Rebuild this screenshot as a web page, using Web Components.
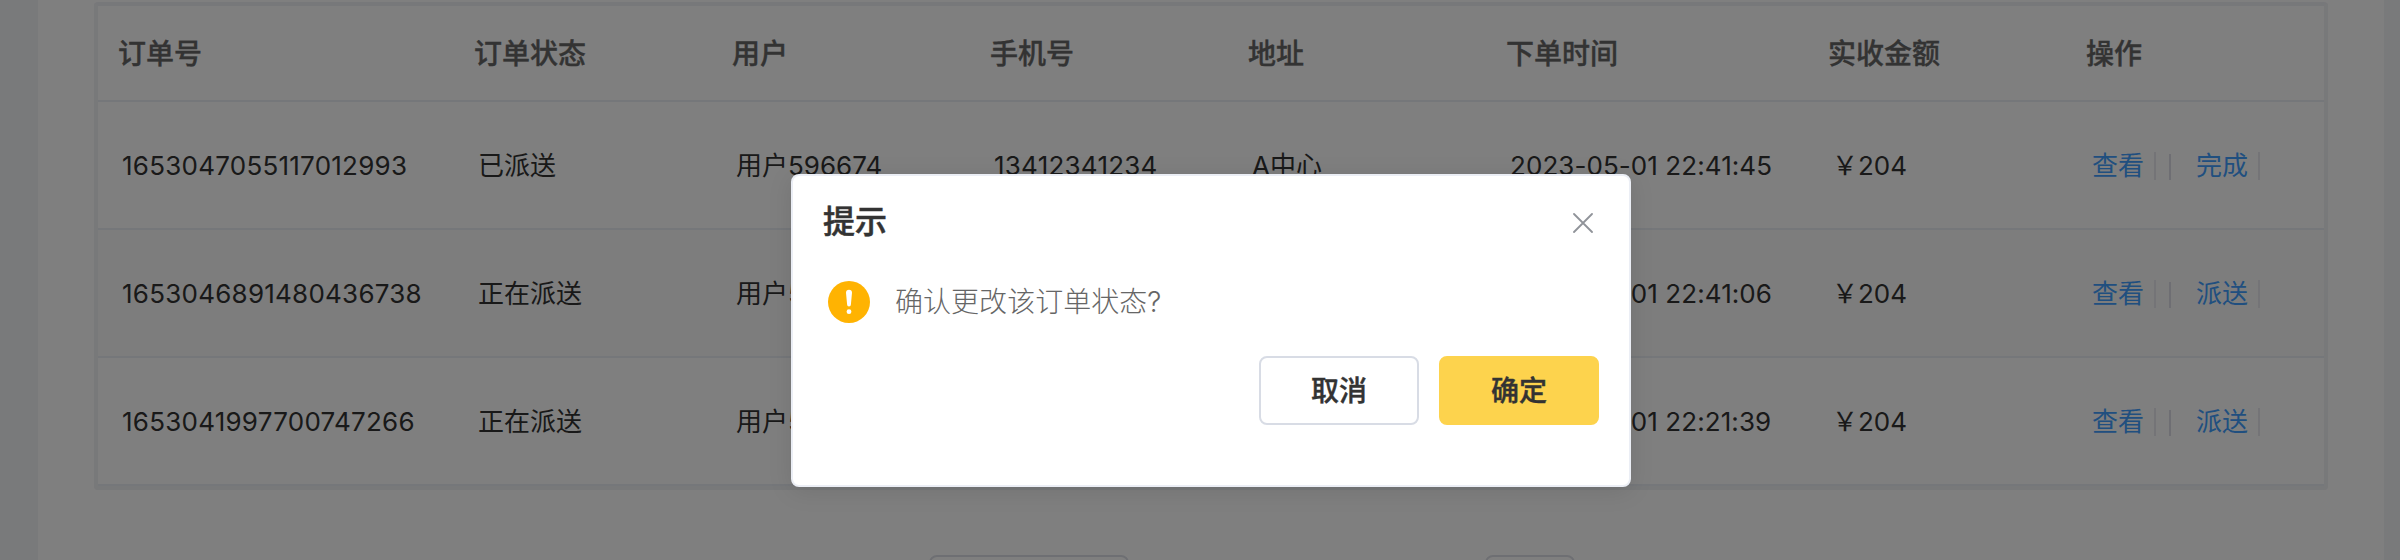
<!DOCTYPE html>
<html lang="zh-CN">
<head>
<meta charset="utf-8">
<title>订单管理</title>
<style>
html,body{margin:0;height:560px;overflow:hidden}
body{font-family:Inter,"Noto Sans CJK SC",sans-serif;color:#333;background:#f3f4f7}
</style>
</head>
<body>
<order-page></order-page>
<script>
const define = (name, html, setup) => customElements.define(name, class extends HTMLElement {
  constructor() {
    super();
    const t = document.createElement('template');
    t.innerHTML = html;
    this.attachShadow({mode: 'open'}).append(t.content.cloneNode(true));
  }
  connectedCallback() { if (setup) setup(this, this.shadowRoot); }
});

const COLS = '356px 258px 258px 258px 258px 322px 258px 258px';

define('order-head', `<style>
:host{display:grid;grid-template-columns:${COLS};height:94px;align-items:center;border-bottom:2px solid #ebeef5;font-size:28px;font-weight:500;-webkit-text-stroke:.35px;line-height:40px;color:#666}
span{padding:1px 0 0 20px}
</style>
<span>订单号</span><span>订单状态</span><span>用户</span><span>手机号</span><span>地址</span><span>下单时间</span><span>实收金额</span><span>操作</span>`);

define('order-actions', `<style>
:host{display:flex;align-items:flex-end;height:28px;font-size:26px;line-height:28px;color:#419eff}
.a{box-sizing:border-box;width:64px;height:28px;border-right:2px solid #e9e9ee}
i{width:2px;height:26px;background:#dcdde6;margin:0 25px 0 13px}
</style>
<span class="a">查看</span><i></i><span class="a"><slot></slot></span>`);

define('order-row', `<style>
:host{display:grid;grid-template-columns:${COLS};height:126px;align-items:center;border-bottom:2px solid #ebeef5;font-size:26px;line-height:36px;color:#333;white-space:nowrap}
:host([striped]){background:#fafafa}
span{padding:2px 0 0 24px}
[data-f=no],[data-f=phone]{letter-spacing:.24px}
[data-f=time]{letter-spacing:.07px}
order-actions{margin:2px 0 0 26px}
</style>
<span data-f="no"></span><span data-f="state"></span><span data-f="user"></span><span data-f="phone"></span><span data-f="address"></span><span data-f="time"></span><span data-f="amount"></span><order-actions></order-actions>`,
(el, root) => {
  for (const s of root.querySelectorAll('[data-f]')) s.textContent = el.getAttribute(s.dataset.f);
  root.querySelector('order-actions').textContent = el.getAttribute('action');
});

define('order-table', `<style>
:host{display:block;box-sizing:border-box;width:2234px;height:488px;border:4px solid #f1f2f5;border-top-color:#eff0f4;border-radius:4px}
</style><slot></slot>`);

define('page-control', `<style>
:host{display:block;box-sizing:border-box;height:60px;border:2px solid #dddfe6;border-radius:8px}
</style>`);

define('icon-close', `<style>:host{display:block;width:20px;height:20px}svg{display:block}</style>
<svg width="20" height="20" viewBox="0 0 20 20" fill="none" stroke="#909399" stroke-width="1.8" stroke-linecap="round"><path d="M1 1l18 18M19 1L1 19"/></svg>`);

define('icon-warning', `<style>:host{display:block;width:42px;height:42px}svg{display:block}</style>
<svg width="42" height="42" viewBox="0 0 42 42"><circle cx="21" cy="21" r="21" fill="#ffb302"/><path d="M18 11.8a3 3 0 0 1 6 0L22.9 23.5a1.9 1.9 0 0 1-3.8 0Z" fill="#fff"/><circle cx="21" cy="30.7" r="2.4" fill="#fff"/></svg>`);

define('app-button', `<style>
:host{display:flex;box-sizing:border-box;width:160px;height:69px;align-items:center;justify-content:center;border:2px solid #d8dce5;border-radius:8px;background:#fff;font-size:28px;font-weight:500;-webkit-text-stroke:.4px;line-height:40px;color:#333}
:host([primary]){background:#fdd34d;border-color:#fdd34d}
</style><slot></slot>`);

define('confirm-dialog', `<style>
:host{display:flex;flex-direction:column;box-sizing:border-box;width:840px;height:313px;padding:26px 30px 0;border:2px solid #ebeef5;border-radius:8px;background:#fff;box-shadow:0 4px 24px rgba(0,0,0,.1)}
header{display:flex;justify-content:space-between;align-items:center;height:40px;font-size:32px;line-height:40px;font-weight:500;color:#333}
header span{-webkit-text-stroke:.5px}
icon-close{margin:1px 6px 0 0}
.msg{display:flex;align-items:center;gap:25px;height:42px;margin-top:39px;padding-left:5px;font-size:28px;line-height:40px;font-weight:300;color:#666}
.msg span{letter-spacing:.04px}
footer{display:flex;justify-content:flex-end;gap:20px;margin-top:33px}
</style>
<header><span>提示</span><icon-close></icon-close></header>
<div class="msg"><icon-warning></icon-warning><span>确认更改该订单状态?</span></div>
<footer><app-button>取消</app-button><app-button primary>确定</app-button></footer>`);

define('order-page', `<style>
:host{display:block;position:relative;width:2400px;height:560px;overflow:hidden;background:#f3f4f7}
main{box-sizing:border-box;width:2346px;height:560px;margin-left:38px;padding:2px 0 0 56px;background:#fff;overflow:hidden}
.pager{display:flex;margin-top:65px;padding-left:835px}
.size{width:200px}
.jump{width:90px;margin-left:356px}
.overlay{position:absolute;inset:0;background:rgba(0,0,0,.5)}
confirm-dialog{position:absolute;left:791px;top:174px}
</style>
<main>
<order-table>
<order-head></order-head>
<order-row no="1653047055117012993" state="已派送" user="用户596674" phone="13412341234" address="A中心" time="2023-05-01 22:41:45" amount="￥204" action="完成"></order-row>
<order-row striped no="1653046891480436738" state="正在派送" user="用户5" phone="" address="" time="2023-05-01 22:41:06" amount="￥204" action="派送"></order-row>
<order-row no="1653041997700747266" state="正在派送" user="用户5" phone="" address="" time="2023-05-01 22:21:39" amount="￥204" action="派送"></order-row>
</order-table>
<div class="pager"><page-control class="size"></page-control><page-control class="jump"></page-control></div>
</main>
<div class="overlay"><confirm-dialog></confirm-dialog></div>`);
</script>
</body>
</html>
